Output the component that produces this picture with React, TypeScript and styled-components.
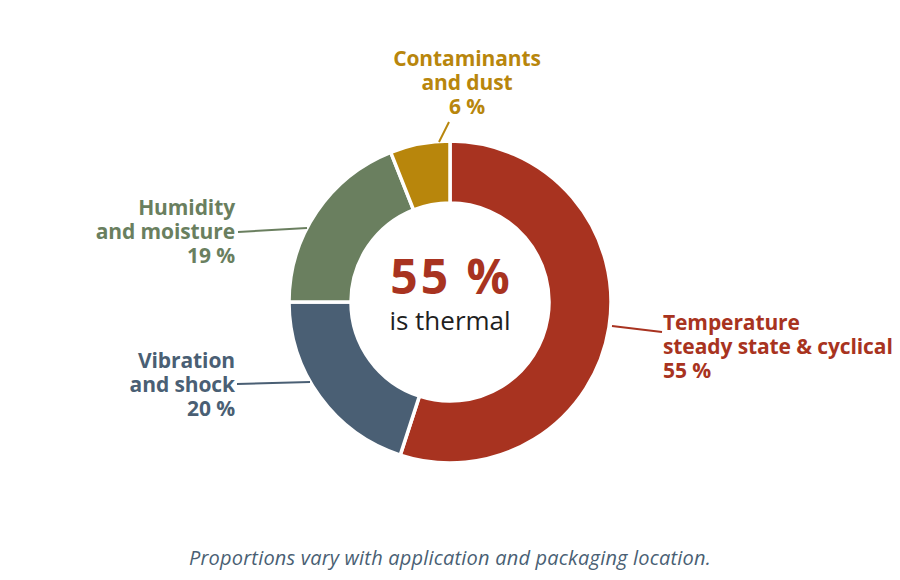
import styled, { createGlobalStyle } from "styled-components"

const GlobalStyle = createGlobalStyle`
  html, body {
    margin: 0;
    padding: 0;
    background: #ffffff;
  }
  body {
    font-family: "Open Sans", "Noto Sans", "Liberation Sans", sans-serif;
  }
`

const COLORS = {
  red: "#a83320",
  blue: "#4a5f74",
  green: "#6a7f5f",
  gold: "#b8860c",
}

interface Segment {
  key: string
  value: number
  color: string
}

const segments: Segment[] = [
  { key: "temperature", value: 55, color: COLORS.red },
  { key: "vibration", value: 20, color: COLORS.blue },
  { key: "humidity", value: 19, color: COLORS.green },
  { key: "contaminants", value: 6, color: COLORS.gold },
]

interface Callout {
  key: string
  lines: string[]
  color: string
  align: "left" | "right" | "center"
  x: number
  top: number
  leader: [number, number, number, number]
}

const callouts: Callout[] = [
  {
    key: "contaminants",
    lines: ["Contaminants", "and dust", "6 %"],
    color: COLORS.gold,
    align: "center",
    x: 467,
    top: 46,
    leader: [439, 142, 449, 122],
  },
  {
    key: "humidity",
    lines: ["Humidity", "and moisture", "19 %"],
    color: COLORS.green,
    align: "right",
    x: 235,
    top: 195,
    leader: [238, 232, 307, 228],
  },
  {
    key: "vibration",
    lines: ["Vibration", "and shock", "20 %"],
    color: COLORS.blue,
    align: "right",
    x: 235,
    top: 348,
    leader: [237, 384, 310, 382],
  },
  {
    key: "temperature",
    lines: ["Temperature", "steady state & cyclical", "55 %"],
    color: COLORS.red,
    align: "left",
    x: 663,
    top: 310,
    leader: [612, 326, 662, 332],
  },
]

const CX = 450
const CY = 302
const R_OUT = 161
const R_IN = 99

const Page = styled.div`
  width: 900px;
  height: 580px;
  display: flex;
  flex-direction: column;
  overflow: hidden;
`

const Chart = styled.div`
  position: relative;
  width: 900px;
  height: 546px;
  flex: none;
`

const Ring = styled.svg`
  position: absolute;
  inset: 0;
  width: 900px;
  height: 546px;
`

const Label = styled.div<{ $color: string; $align: "left" | "right" | "center" }>`
  position: absolute;
  color: ${p => p.$color};
  font-size: 21px;
  font-weight: 700;
  line-height: 24px;
  letter-spacing: -0.1px;
  white-space: nowrap;
  text-align: ${p => p.$align};
  transform: ${p =>
    p.$align === "right" ? "translateX(-100%)" : p.$align === "center" ? "translateX(-50%)" : "none"};
`

const Center = styled.div`
  position: absolute;
  left: ${CX}px;
  top: 251px;
  transform: translateX(-50%);
  display: flex;
  flex-direction: column;
  align-items: center;
  white-space: nowrap;
`

const BigValue = styled.span`
  color: ${COLORS.red};
  font-size: 48px;
  font-weight: 700;
  line-height: 50px;
  letter-spacing: 3px;
  padding-left: 3px;
`

const Subtitle = styled.span`
  color: #1f1f1f;
  font-size: 26px;
  font-weight: 400;
  line-height: 28px;
  margin-top: 5px;
`

const Caption = styled.p`
  margin: 0;
  text-align: center;
  color: ${COLORS.blue};
  font-size: 20px;
  font-style: italic;
  line-height: 24px;
  letter-spacing: 0.2px;
`

const polar = (r: number, deg: number) => {
  const a = (deg * Math.PI) / 180
  return [CX + r * Math.sin(a), CY - r * Math.cos(a)]
}

const arcPath = (start: number, end: number) => {
  const large = end - start > 180 ? 1 : 0
  const [x1, y1] = polar(R_OUT, start)
  const [x2, y2] = polar(R_OUT, end)
  const [x3, y3] = polar(R_IN, end)
  const [x4, y4] = polar(R_IN, start)
  return `M${x1} ${y1} A${R_OUT} ${R_OUT} 0 ${large} 1 ${x2} ${y2} L${x3} ${y3} A${R_IN} ${R_IN} 0 ${large} 0 ${x4} ${y4} Z`
}

const Donut = () => {
  const total = segments.reduce((s, d) => s + d.value, 0)
  let acc = 0
  return (
    <Ring viewBox="0 0 900 546">
      {segments.map(seg => {
        const start = (acc / total) * 360
        acc += seg.value
        const end = (acc / total) * 360
        return (
          <path key={seg.key} d={arcPath(start, end)} fill={seg.color} stroke="#ffffff" strokeWidth={3.5} />
        )
      })}
      {callouts.map(c => (
        <line
          key={c.key}
          x1={c.leader[0]}
          y1={c.leader[1]}
          x2={c.leader[2]}
          y2={c.leader[3]}
          stroke={c.color}
          strokeWidth={2}
        />
      ))}
    </Ring>
  )
}

export default function App() {
  return (
    <Page>
      <GlobalStyle />
      <Chart>
        <Donut />
        {callouts.map(c => (
          <Label key={c.key} $color={c.color} $align={c.align} style={{ left: c.x, top: c.top }}>
            {c.lines.map(l => (
              <div key={l}>{l}</div>
            ))}
          </Label>
        ))}
        <Center>
          <BigValue>55 %</BigValue>
          <Subtitle>is thermal</Subtitle>
        </Center>
      </Chart>
      <Caption>Proportions vary with application and packaging location.</Caption>
    </Page>
  )
}
